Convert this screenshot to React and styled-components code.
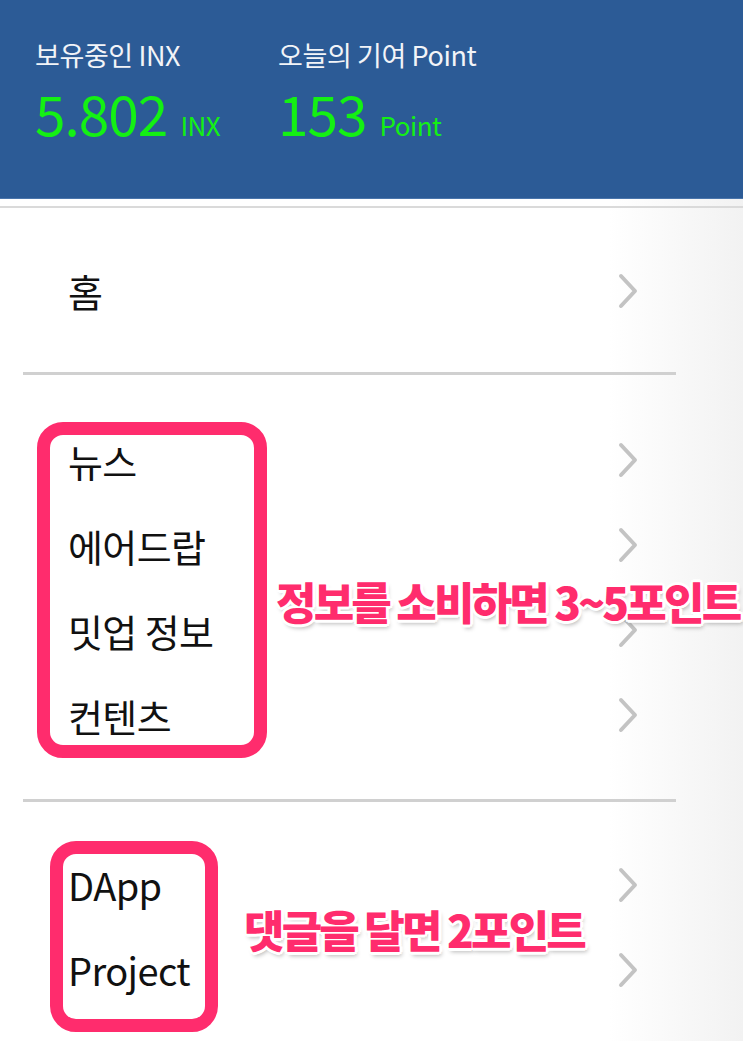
import React from 'react'
import styled, {createGlobalStyle} from 'styled-components'

const GlobalStyle = createGlobalStyle`
  html, body {
    margin: 0;
    padding: 0;
  }
  body {
    font-family: "Noto Sans CJK KR", "Noto Sans", sans-serif;
    background: linear-gradient(to right, #ffffff 0%, #ffffff 82%, #f2f2f2 100%);
    min-height: 1041px;
  }
`

const Page = styled.div`
  width: 743px;
  min-height: 1041px;
  overflow: hidden;
`

const Header = styled.header`
  height: 199px;
  box-sizing: border-box;
  background-color: #2c5b96;
  border-bottom: 1px solid #4a75ab;
  padding: 37px 0 0 35px;
  display: flex;
`

const Stat = styled.div`
  width: ${props => props.w}px;
  display: flex;
  flex-direction: column;
`

const StatLabel = styled.div`
  color: #f2f4f8;
  font-size: 27px;
  line-height: 36px;
  letter-spacing: -0.4px;
`

const StatValue = styled.div`
  color: #14f014;
  margin-top: 10px;
  display: flex;
  align-items: baseline;
  gap: 13px;
`

const Big = styled.span`
  font-size: 55px;
  line-height: 58px;
  letter-spacing: -1px;
`

const Unit = styled.span`
  font-size: 26px;
  letter-spacing: -0.5px;
`

const TopRule = styled.div`
  height: 2px;
  margin-top: 7px;
  background: #dadada;
`

const Menu = styled.div`
  margin: 0 67px 0 23px;
`

const Group = styled.div`
  position: relative;
  padding: ${props => props.pad};
  border-bottom: ${props => (props.last ? 'none' : '3px solid #d0d0d0')};
`

const Row = styled.div`
  height: 85px;
  display: flex;
  align-items: center;
  justify-content: space-between;
  padding: 0 38px 0 45px;
`

const Label = styled.span`
  font-size: 38px;
  color: #111;
  letter-spacing: -0.6px;
  margin-top: ${props => props.shift || 0}px;
`

const Highlight = styled.div`
  position: absolute;
  left: ${props => props.x}px;
  top: ${props => props.y}px;
  width: ${props => props.w}px;
  height: ${props => props.h}px;
  box-sizing: border-box;
  border: 13px solid #ff2c6d;
  border-radius: 26px;
  pointer-events: none;
`

const Note = styled.div`
  position: absolute;
  left: ${props => props.x}px;
  top: ${props => props.y}px;
  white-space: nowrap;
  color: #ff2c6d;
  font-weight: 900;
  font-size: 44px;
  line-height: 50px;
  letter-spacing: -2.8px;
  text-shadow:
    -2px -2px 0 #fff, 2px -2px 0 #fff, -2px 2px 0 #fff, 2px 2px 0 #fff,
    0 -3px 0 #fff, 0 3px 0 #fff, -3px 0 0 #fff, 3px 0 0 #fff,
    2px 4px 4px rgba(0, 0, 0, 0.28);
`

const Chevron = () => (
  <svg width="20" height="36" viewBox="0 0 20 36">
    <polyline points="3,3 17,18 3,33" fill="none" stroke="#c3c3c3" strokeWidth="4" strokeLinecap="round" strokeLinejoin="round" />
  </svg>
)

function MenuRow({label, shift}) {
  return (
    <Row>
      <Label shift={shift}>{label}</Label>
      <Chevron />
    </Row>
  )
}

function App() {
  return (
    <React.Fragment>
      <GlobalStyle />
      <Page>
        <Header>
          <Stat w={243}>
            <StatLabel>보유중인 INX</StatLabel>
            <StatValue><Big>5.802</Big><Unit>INX</Unit></StatValue>
          </Stat>
          <Stat w={300}>
            <StatLabel>오늘의 기여 Point</StatLabel>
            <StatValue><Big>153</Big><Unit>Point</Unit></StatValue>
          </Stat>
        </Header>
        <TopRule />
        <Menu>
          <Group pad="40px 0 39px">
            <MenuRow label="홈" />
          </Group>
          <Group pad="42px 0 42px">
            <MenuRow label="뉴스" shift={2} />
            <MenuRow label="에어드랍" shift={2} />
            <MenuRow label="밋업 정보" shift={2} />
            <MenuRow label="컨텐츠" shift={2} />
            <Highlight x={14} y={47} w={230} h={336} />
            <Note x={253} y={201}>정보를 소비하면 3~5포인트</Note>
          </Group>
          <Group pad="40px 0 60px" last>
            <MenuRow label="DApp" />
            <MenuRow label="Project" />
            <Highlight x={27} y={39} w={168} h={191} />
            <Note x={221} y={102}>댓글을 달면 2포인트</Note>
          </Group>
        </Menu>
      </Page>
    </React.Fragment>
  )
}

export default App
